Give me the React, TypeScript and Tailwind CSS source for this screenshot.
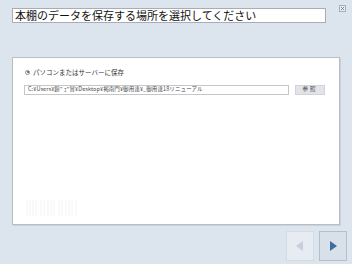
import React from "react";

const jp = { fontFamily: '"Noto Sans CJK JP", "Liberation Sans", sans-serif' };

export default function App() {
    const path = "C:¥Users¥鈴\" ｪ\"冒¥Desktop¥褐南門¥御用達¥_御用達18リニューアル";

    return (
        <div className="w-[352px] h-[264px] bg-[#dce4ed] flex flex-col overflow-hidden" style={jp}>
            {/* HEADER */}
            <div className="flex items-start pl-[12px] pt-[5px]">
                <div className="mt-[3px] w-[314px] h-[15px] bg-white border border-[#a9adb3] flex items-center pl-[2px]">
                    <span className="text-[11px] leading-none text-[#111]">本棚のデータを保存する場所を選択してください</span>
                </div>
                <div className="ml-[13px] w-[7px] h-[7px] border border-[#a4adb8] bg-[#e8edf2] flex items-center justify-center">
                    <svg width="5" height="5" viewBox="0 0 5 5">
                        <path d="M1 1 L4 4 M4 1 L1 4" stroke="#6b7683" strokeWidth="0.8" />
                    </svg>
                </div>
            </div>

            {/* PANEL */}
            <div className="ml-[12px] mt-[34px] w-[328px] h-[168px] bg-white border border-[#b9bec6] shadow-[1px_1px_0_#c9d1da] flex flex-col pt-[11px] relative">
                <div className="flex items-center pl-[12px] gap-[3px]">
                    <span className="w-[5px] h-[5px] rounded-full border border-[#8a8f96] flex items-center justify-center">
                        <span className="w-[2px] h-[2px] rounded-full bg-[#555]" />
                    </span>
                    <span className="text-[6.5px] leading-none text-[#333]">パソコンまたはサーバーに保存</span>
                </div>
                <div className="flex items-center pl-[11px] mt-[9px]">
                    <div className="w-[265px] h-[10px] border border-[#c3c7cc] bg-white flex items-center pl-[3px] overflow-hidden">
                        <span className="text-[5.5px] leading-none text-[#444] whitespace-nowrap tracking-[0.1px]">{path}</span>
                    </div>
                    <div className="ml-[6px] w-[30px] h-[10px] bg-[#e2e4e7] border border-[#d0d3d7] flex items-center justify-center">
                        <span className="text-[5.5px] leading-none text-[#444] tracking-[2px]">参照</span>
                    </div>
                </div>

                {/* faint marks */}
                <svg className="absolute left-[13px] top-[142px]" width="54" height="16" viewBox="0 0 54 16">
                    {[1, 4, 7, 10, 15, 18, 22, 25, 28, 33, 36, 40, 43, 46, 50].map(x => (
                        <line key={x} x1={x} y1="0" x2={x} y2="16" stroke="#f3f4f6" strokeWidth="1" />
                    ))}
                </svg>
            </div>

            {/* NAV */}
            <div className="flex justify-end gap-[5px] pr-[5px] mt-[6px]">
                <div className="w-[28px] h-[30px] bg-[#e6ecf2] border border-[#d3dbe4] flex items-center justify-center">
                    <svg width="8" height="10" viewBox="0 0 8 10">
                        <path d="M7 0 L0 5 L7 10 Z" fill="#c5d0dc" />
                    </svg>
                </div>
                <div className="w-[28px] h-[30px] bg-[#d8e0e9] border border-[#b2bfcd] flex items-center justify-center">
                    <svg width="8" height="10" viewBox="0 0 8 10">
                        <path d="M1 0 L8 5 L1 10 Z" fill="#3e6c9c" />
                    </svg>
                </div>
            </div>
        </div>
    );
}
